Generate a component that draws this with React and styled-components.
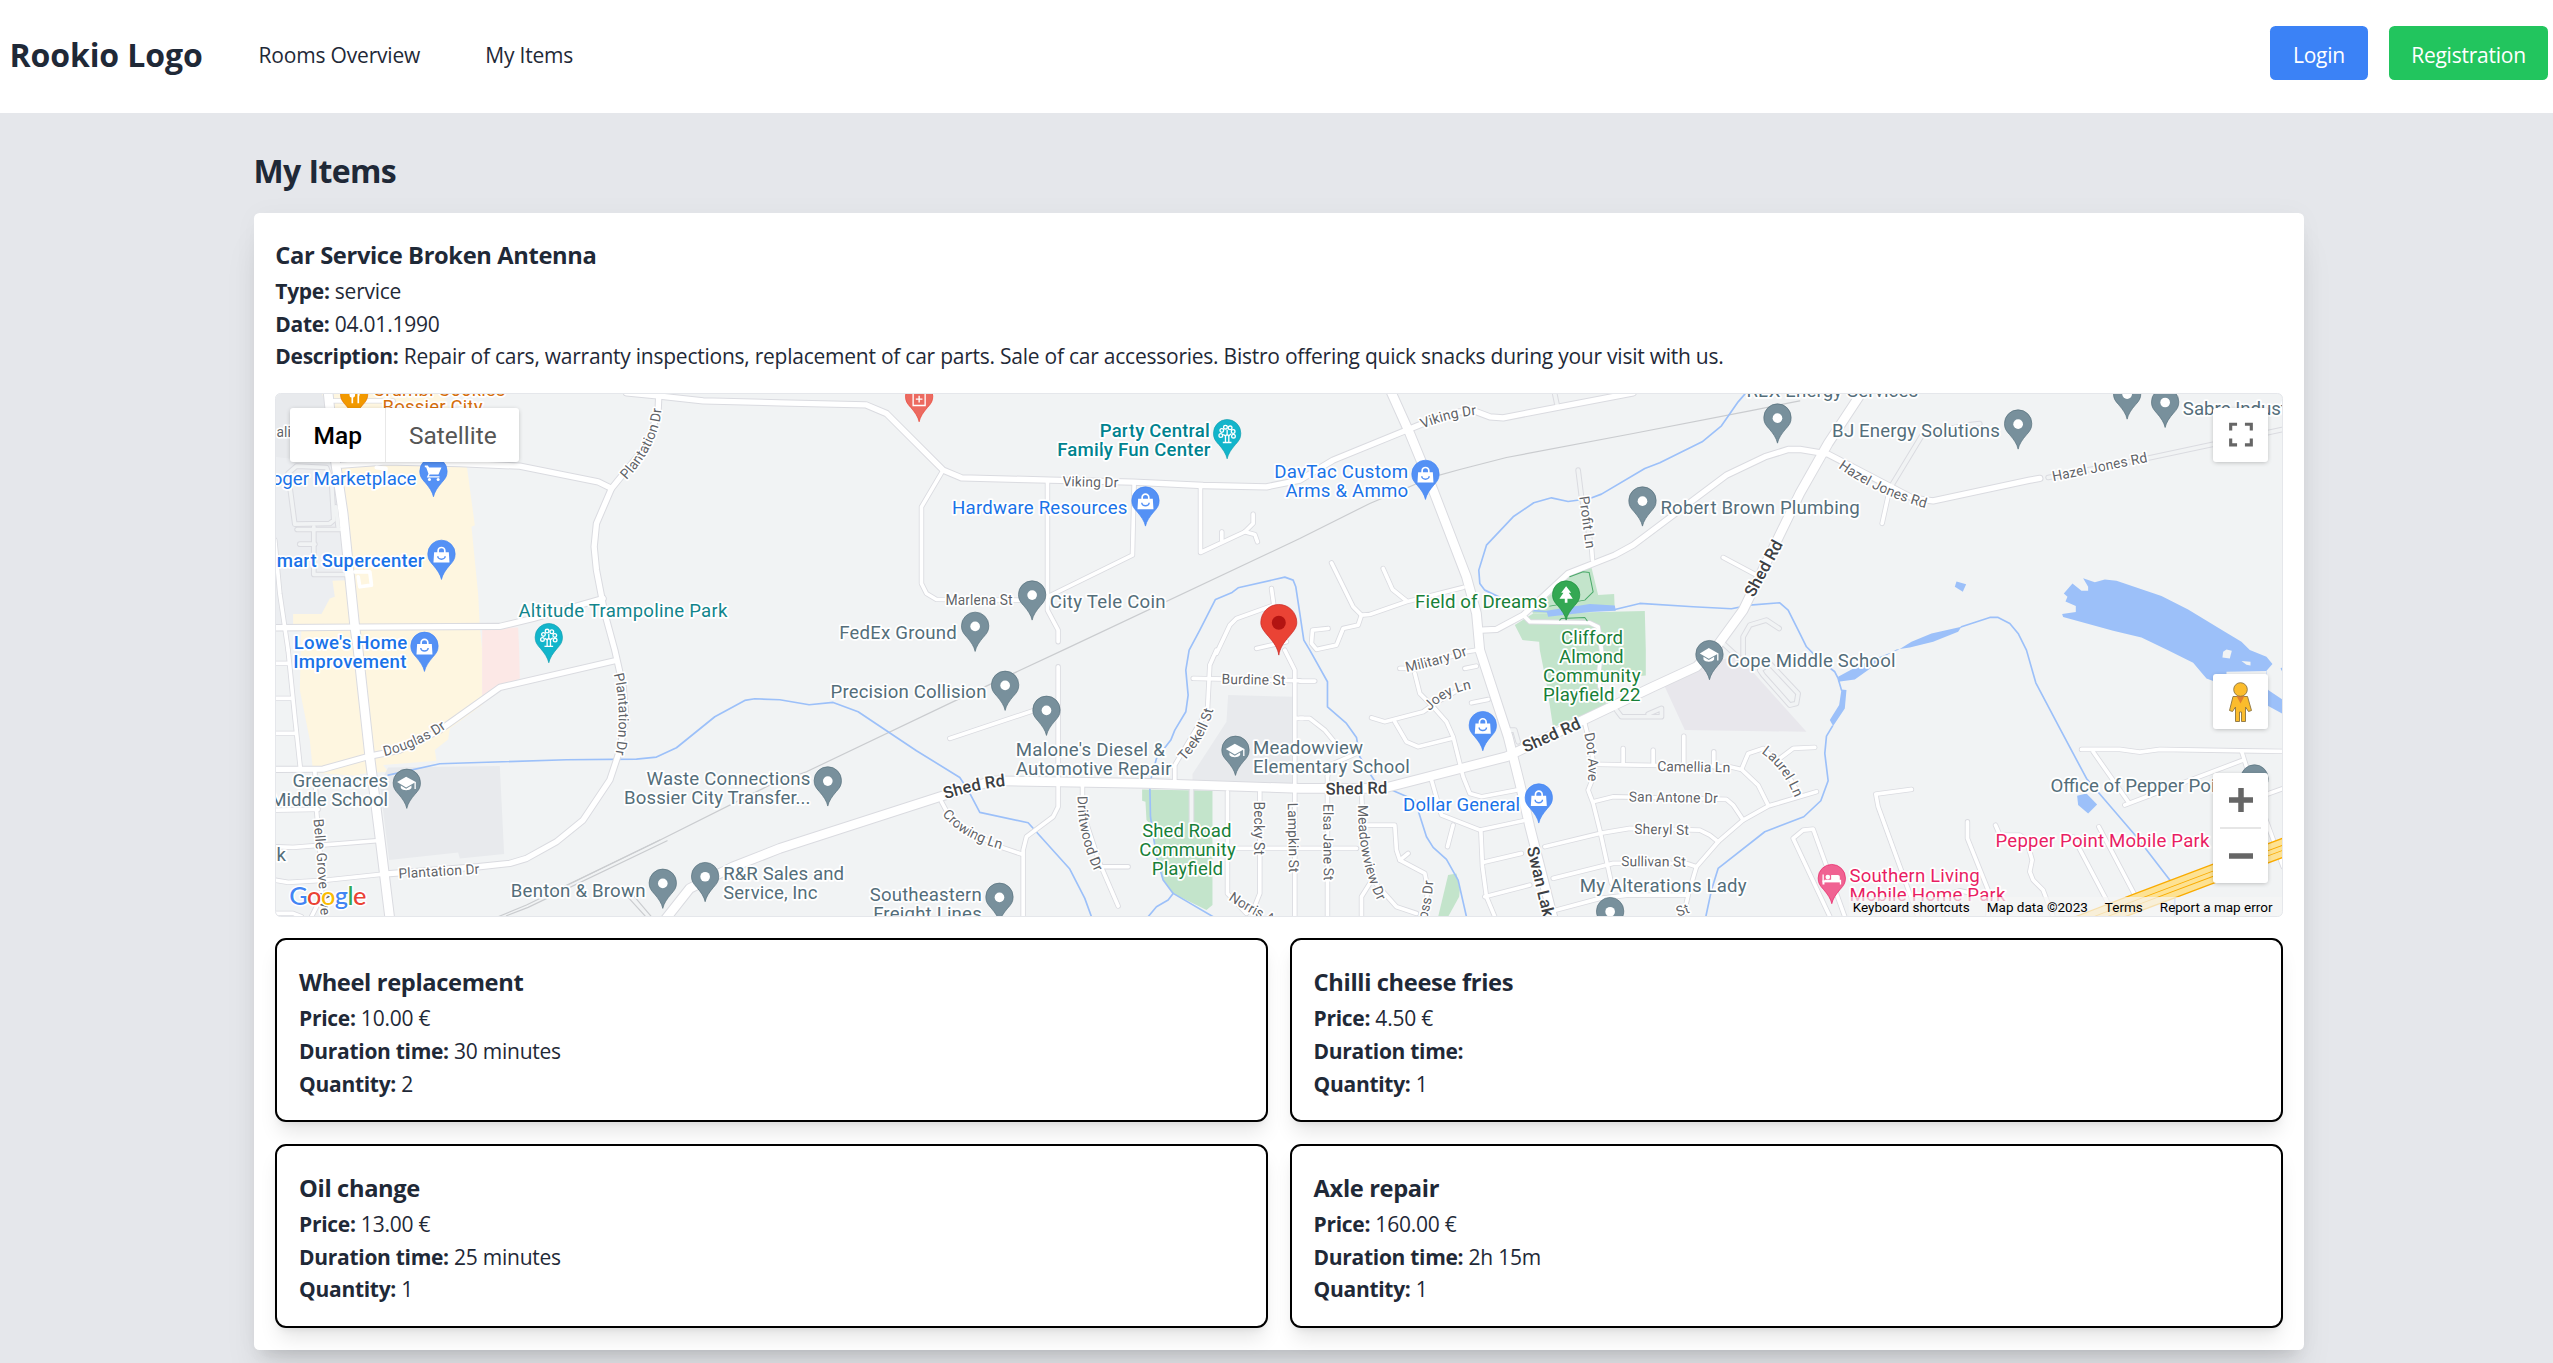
import React from "react";
import styled, { createGlobalStyle, css } from "styled-components";

const GlobalStyle = createGlobalStyle`
  *, *::before, *::after { box-sizing: border-box; }
  body {
    margin: 0;
    background: #e5e7eb;
    color: #1f2937;
    font-family: "Open Sans", "Noto Sans", sans-serif;
    overflow: hidden;
  }
  h1, h2, h3, p { margin: 0; }
`;

/* ---------- page shell ---------- */

const bodyText = css`
  font-size: 21px;
  letter-spacing: -0.24px;
`;

const Page = styled.div`
  height: 1363px;
  overflow: hidden;
`;

const Header = styled.header`
  display: flex;
  align-items: flex-start;
  height: 113px;
  padding: 26px 5px 0 9.5px;
  background: #fff;
`;

const Brand = styled.div`
  width: 249px;
  padding-top: 7px;
  font-size: 32px;
  font-weight: 700;
  line-height: 43.6px;
  letter-spacing: -0.1px;
`;

const Nav = styled.nav`
  display: flex;
  gap: 65px;
  flex: 1;
`;

const NavLink = styled.a`
  ${bodyText}
  padding-top: 13px;
  line-height: 32.7px;
  letter-spacing: -0.18px;
`;

const Actions = styled.div`
  display: flex;
  gap: 21px;
`;

const Button = styled.button`
  ${bodyText}
  width: ${(p) => p.$width}px;
  height: 54px;
  padding: 4px 0 0;
  border: 0;
  border-radius: 5.5px;
  background: ${(p) => p.$color};
  color: #fff;
  font-family: inherit;
`;

const Main = styled.main`
  width: 2050.8px;
  margin-left: 253.5px;
  padding-top: 36px;
`;

const PageTitle = styled.h1`
  margin-bottom: 20.4px;
  font-size: 32px;
  line-height: 43.6px;
  letter-spacing: -0.6px;
`;

const Card = styled.section`
  padding: 21.8px;
  border-radius: 5.5px;
  background: #fff;
  box-shadow: 0 27px 34px -7px rgba(0, 0, 0, 0.1), 0 11px 14px -8px rgba(0, 0, 0, 0.1),
    0 0 26px rgba(0, 0, 0, 0.03);
`;

const Title = styled.h2`
  height: 38.1px;
  padding-top: 2px;
  font-size: 23.7px;
  line-height: 36.1px;
  letter-spacing: -0.36px;
`;

const Line = styled.p`
  ${bodyText}
  height: 32.7px;
  padding-top: 4px;
  line-height: 29.7px;
  white-space: nowrap;
`;

const Label = styled.strong`
  font-weight: 700;
  letter-spacing: -0.3px;
`;

const ItemGrid = styled.div`
  display: grid;
  grid-template-columns: 1fr 1fr;
  gap: 21.8px;
`;

const Item = styled.article`
  padding: 21.8px;
  border: 2px solid #000;
  border-radius: 11px;
  background: #fff;
  box-shadow: 0 13.6px 20.4px -4px rgba(0, 0, 0, 0.1), 0 5.5px 8px -5.5px rgba(0, 0, 0, 0.1);
`;

/* ---------- map frame and controls ---------- */

const MapFrame = styled.div`
  position: relative;
  height: 523.9px;
  margin: 21.8px 0;
  border: 1px solid #e5e7eb;
  border-radius: 5.5px;
  background: #f1f3f4;
  overflow: hidden;
`;

const MapSvg = styled.svg`
  display: block;
  width: 100%;
  height: 100%;
  font-family: Roboto, sans-serif;
`;

const controlBox = css`
  position: absolute;
  border-radius: 3px;
  background: #fff;
  box-shadow: 0 1px 5px -1px rgba(0, 0, 0, 0.3);
`;

const MapTypes = styled.div`
  ${controlBox}
  top: 14px;
  left: 14px;
  display: flex;
  height: 54px;
  font-family: Roboto, sans-serif;
  font-size: 24.5px;
  line-height: 55px;
`;

const MapType = styled.div`
  width: ${(p) => p.$width}px;
  text-align: center;
  color: ${(p) => (p.$active ? "#000" : "#565656")};
  font-weight: ${(p) => (p.$active ? 500 : 400)};
  border-left: ${(p) => (p.$active ? "0" : "1px solid #e8e8e8")};
`;

const Control = styled.div`
  ${controlBox}
  top: ${(p) => p.$top}px;
  right: 14px;
  width: 55px;
  height: ${(p) => p.$height}px;
  display: flex;
  flex-direction: column;
`;

const Glyph = styled.svg`
  display: block;
  width: 55px;
  height: 55px;
`;

const Divider = styled.div`
  height: 2px;
  margin: -1px 7px;
  background: #e6e6e6;
`;

const Attribution = styled.div`
  position: absolute;
  right: 0;
  bottom: 0;
  display: flex;
  gap: 17px;
  height: 19px;
  padding: 0 9px 0 4px;
  background: rgba(245, 245, 245, 0.7);
  color: #000;
  font-family: Roboto, sans-serif;
  font-size: 13.5px;
  line-height: 20px;
  white-space: nowrap;
`;

/* ---------- map drawing ---------- */

/* The map is drawn in map units, on a grid of tiles; a feature is written in
   the units of the tile in which it lies and is moved to its place here. */
const TILES = {
  A: [0, 0], B: [1560, 0], C: [3120, 0], D: [4620, 0],
  E: [0, 810], F: [1560, 810], G: [3120, 810], H: [4620, 810],
};

const place = (points) => {
  let tile = TILES.A;
  return points
    .trim()
    .split(/\s+/)
    .map((token) => {
      if (TILES[token]) {
        tile = TILES[token];
        return null;
      }
      const [x, y] = token.split(",").map(Number);
      return `${x + tile[0]},${y + tile[1]}`;
    })
    .filter(Boolean)
    .join(" ");
};

const AREAS = [
  ["#e8eaed", "A 40,38 190,38 210,240 130,255 45,230"],
  ["#eceef1", "A 45,230 215,250 240,400 285,740 45,743"],
  ["#fef6e0", "A 185,38 550,38 620,250 645,435 635,440 655,640 660,740 667,810 E 667,165 570,235 565,268 525,300 530,332 370,345 385,365 300,372 300,378 160,368 150,270 120,120 A 125,735 100,735 100,702 185,702 210,655 225,650 218,602 260,600 240,250 200,70"],
  ["#fce8e6", "A 667,745 775,742 778,810 E 780,85 720,112 667,145"],
  ["#e8eaed", "E 385,352 720,348 733,612 600,625 595,607 388,630 360,400"],
  ["#e8eaed", "F 1345,135 1545,140 1545,400 1238,395 1238,372 1340,215"],
  ["#e8e7ec", "G 1095,110 1190,50 1300,20 1345,50 1520,245 1155,240"],
  ["#c3e4cb", "F 1087,418 1298,422 1298,740 1298,765 1280,780 1180,730 1145,680 1110,520 1100,510 1097,455 1087,452"],
  ["#c3e4cb", "G 445,675 470,670 480,720 478,740 445,800 415,800"],
  ["#c3e4cb", "C 875,562 895,645 943,642 945,690 700,700 690,680 760,640 800,580"],
  ["#c3e4cb", "C 645,735 700,700 1035,693 1038,810 G 1038,76 895,90 920,165 760,232 740,100 720,0 C 718,785 668,780"],
  ["#9cc0f9", "C 740,692 870,672 945,676 948,692 870,696 745,710"],
  ["#9cc0f9", "D 295,810 335,785 395,760 485,740 475,755 400,785 330,802 H 290,-2 262,15 205,60 165,88 115,95 115,80 180,45 262,12"],
  ["#9cc0f9", "H 125,118 140,120 135,175 100,228 90,210 118,165"],
  ["#9cc0f9", "D 850,594 885,606 915,598 950,602 1085,648 1165,688 1270,752 1325,785 1350,810 H 1400,20 1418,42 1400,62 1405,120 1450,150 1450,192 1400,165 1238,92 1220,85 1180,38 1103,0 D 1025,772 940,752 790,711 787,702 828,696 828,678 797,664 803,650 792,640 818,610 845,632 865,632 865,620"],
  ["#9cc0f9", "H 1442,55 1450,50 1450,70"],
  ["#f1f3f4", "H 1270,5 1280,-2 1296,2 1290,25 1268,22"],
  ["#f1f3f4", "H 1325,33 1352,35 1352,46 1340,44"],
  ["#f1f3f4", "H 1280,65 1400,63 1400,120 1350,120 1280,75"],
  ["#9cc0f9", "D 470,604 499,612 489,635 465,620"],
  ["#9cc0f9", "H 832,437 860,430 892,463 865,490 835,465"],
];

const RAILS = [
  "E 715,800 800,765 1180,580 1540,400 F 80,365 530,150 850,0 C 0,475 210,370 400,290 480,268 620,232 1000,160 1350,92 1500,62",
  "E 740,797 805,772 1222,572",
  "E 880,725 1200,570",
  "E 1103,740 1158,800",
  "E 1120,735 1175,800",
];

const STREAMS = [
  "E 385,375 540,341 920,329 1130,327 1190,321 1250,293 1365,200 1455,151 1485,146 F 0,149 88,164 160,157 235,185 410,302 540,382 565,420 600,487 745,518 870,657 915,745 935,800",
  "F 1300,800 1180,730 1150,690 1130,620 1112,500 1110,400 1130,325 1173,270 1185,240 1218,185 1225,135 1218,60 1228,0 B 1260,750 1307,658 1357,637 1375,623 1515,591 1540,600 1548,620 C 0,700 12,780 30,810 G 83,95 83,170 140,220 170,262 180,320 210,370 230,400 345,450 380,560 400,592 440,628 475,690 500,800",
  "F 1180,730 1165,750 1130,770 1105,800",
  "C 1335,42 1315,65 1265,137 1207,185 1080,248 1035,265 905,342 870,355 805,364 755,353 702,368 640,410 560,495 537,570 540,610 555,630 680,690 745,695",
  "C 945,688 1020,670 1180,680 1295,686 1350,675 1440,668 1465,690 1500,760 D 20,800 H 60,30 105,65 115,85 125,120",
  "H 98,228 80,258 75,310 85,392 63,452 12,500 G 1395,545 1255,655 1235,720 1218,800",
  "D 485,740 570,712 595,712 630,730 655,760 680,810 H 708,98 780,235 860,385 1010,560 1110,690",
  "H 1125,735 1125,800",
];

/* outlined service lanes */
const LANES = [
  "A 110,258 200,262 215,300 222,420 210,430 105,432 85,280 110,258",
  "A 112,448 240,448",
  "A 120,492 165,492",
  "A 162,440 162,583 260,583",
  "A 228,380 235,440",
  "C 765,42 772,75",
  "C 835,270 845,350 875,500",
  "C 1270,790 1335,850",
  "C 1330,840 1330,770 1350,735 1400,720 1438,745",
  "D 540,130 500,135 370,160 270,325",
  "D 745,292 1040,235 1447,148",
  "G 950,180 965,200 1085,200 1085,175 1045,192",
  "G 1390,75 1470,165 1490,160 1495,130 1410,40 1380,60 1390,75",
  "G 620,240 645,240 655,275",
  "F 1235,420 1235,535",
];

const SMALL = [
  "E 85,0 105,200 122,358", "A 45,480 60,640 85,810",
  "E 45,40 85,40", "E 45,145 95,145", "E 45,250 108,250", "E 45,480 175,478",
  "E 165,360 170,478 180,600 190,700 180,750 155,800", "E 45,590 100,592 350,572", "E 45,790 100,790 125,800",
  "E 45,690 85,697 200,690 370,672", "A 215,62 400,62",
  "B 490,270 425,380 425,610 440,640 470,658 720,660", "B 803,300 803,690 835,750 835,785",
  "B 1063,310 1058,525 803,650", "B 1262,320 1262,517 1395,455 1420,430 1420,402",
  "B 1395,455 1425,463 1433,485", "B 1326,480 1326,455", "B 1475,625 1482,675 1370,715 1350,735 1310,820",
  "B 1430,805 1520,785",
  "F 1515,0 1545,60 1545,800", "F 1240,85 1560,92", "F 1310,0 1290,45 1283,180 1185,345 1185,400",
  "F 835,50 835,470 820,500 740,560 730,600 730,800", "F 908,405 908,440 920,520 960,640 1015,768",
  "F 965,650 1045,650", "F 485,455 520,520 660,590 725,612", "F 510,265 760,182",
  "F 1345,595 1730,595", "F 1440,425 1440,730 1420,780", "F 1343,425 1343,730 1400,790", "F 1545,205 1570,205",
  "C 95,548 160,680 185,705 210,703 320,665 490,622", "C 250,565 278,628 320,662",
  "C 185,705 175,735 130,745 110,795 50,808 35,790 38,750 85,745", "C 1270,532 1370,585",
  "C 875,500 878,540", "C 670,705 690,725 870,728 895,740 905,810 G 898,60 900,110", "D 270,325 247,430",
  "G 0,93 45,93", "G 0,205 30,205 75,240 120,295", "G 300,55 340,55 500,5 530,0",
  "G 345,70 360,130 400,170 440,215 460,260 490,380 510,430 545,440 650,420",
  "G 215,203 255,215 370,185 405,160 500,105", "G 285,215 320,275 355,290 455,265", "G 515,158 565,148",
  "G 495,55 530,48", "G 395,390 425,495 540,540 670,512", "G 460,525 443,590",
  "G 543,540 548,650 560,740 585,800", "G 550,637 665,610", "G 555,740 690,705",
  "G 735,590 900,550 990,535 1200,540 1230,555 1255,575", "G 760,685 940,640 1160,640 1190,650",
  "G 750,785 900,745 985,735 1160,735", "G 855,220 875,300 885,370 865,420 880,460 900,540 935,700",
  "G 895,343 1290,350 1325,358 1375,405 1405,465", "G 970,295 970,340", "G 1060,300 1060,340",
  "G 1152,258 1152,345", "G 1242,305 1242,350", "G 1325,358 1345,310 1390,295 1450,350 1500,435",
  "G 1440,325 1480,295 1545,292", "G 880,455 940,440 1280,448 1300,465 1330,510",
  "G 1550,425 1405,468 1330,510 1255,575 1190,650 1165,735 1150,800",
  "G 83,345 83,800", "G 83,380 90,345 170,310", "G 185,430 190,520 195,600 210,680 290,770 350,790",
  "G 190,525 285,525 290,600 300,630 375,670 385,720 370,800", "G 300,630 325,610", "G 185,800 185,740 210,700",
  "H 95,810 -20,565 10,540 40,537 135,800",
  "H 845,298 960,298 1020,306 1080,298 1320,302 1450,304", "H 880,305 985,455", "H 975,465 1330,330",
  "H 1325,302 1340,350 1450,650", "H 1380,440 1450,415", "H 335,418 228,432 235,470 355,800",
  "H 503,515 503,565 565,720 565,800", "H 587,525 600,555 660,555 680,570 697,630 690,665 700,690 730,720 760,800",
  "H 820,560 915,740 940,790", "H 897,530 1005,735", "H 540,735 480,722 440,735 440,800",
];

const MEDIUM = [
  "A 1100,38 1200,48 1330,62 B 0,68 258,74 320,100 490,270 545,293 810,300 1060,306 1270,316 1460,320 C 0,300 100,240 320,150 370,130 480,95 530,95 570,110 610,113 780,80 1000,38",
  "A 1197,45 1195,90 1165,190 1055,325 1010,430 1003,500 1010,570 1035,700 E 1065,0 1090,110 1098,200 1080,300 1050,390 970,510 890,575 800,625 750,640 655,650 370,672",
  "A 245,255 380,245 600,250 780,258 1015,305 1055,325",
  "A 45,743 290,741 720,739 820,715 1030,655",
  "E 45,358 190,357 330,318 420,300 540,240 720,112 1065,32",
  "C 545,750 590,748 670,705 805,580 945,525 1000,495 1280,285 1395,230 1465,208 D 0,208 85,222 340,355 400,362 690,300 720,295",
];

const MAJOR = [
  "A 205,38 225,230 250,400 285,740 E 295,0 330,320 360,560 390,805",
  "C 275,38 330,160 400,330 500,590 530,700 G 540,0 625,260 660,400 690,530 760,805",
  "E 1215,810 1290,715 1420,650 F 0,595 480,440 640,392 1100,400 G 0,415 250,415 620,320 840,215 1060,110 1190,50 C 1250,800 1330,690 D 0,340 85,190 185,38",
];

const ROAD_CLASSES = [
  { roads: LANES, casing: 17, fill: 11, color: "#f1f3f4" },
  { roads: SMALL, casing: 16, fill: 11, color: "#fff" },
  { roads: MEDIUM, casing: 22, fill: 16, color: "#fff" },
  { roads: MAJOR, casing: 32, fill: 26, color: "#fff" },
];

const Poly = ({ at, stroke, width }) => (
  <polyline
    points={place(at)}
    fill="none"
    stroke={stroke}
    strokeWidth={width}
    strokeLinecap="round"
    strokeLinejoin="round"
  />
);

const SLATE = "#546e7a";
const BLUE = "#1a73e8";
const GREEN = "#188038";
const TEAL = "#12858c";
const PINK = "#e91e63";

/* tile, text, colour, x, baseline, length (0: natural), anchor, weight */
const PLACES = [
  ["A", "Crumbl Cookies", "#d56e0c", 340, 47, 397],
  ["A", "Bossier City", "#d56e0c", 368, 98, 300],
  ["A", "Kroger Marketplace", BLUE, 470, 314, 0, "end"],
  ["A", "mart Supercenter", BLUE, 51, 561, 443, "start", 500],
  ["A", "Lowe's Home", BLUE, 102, 808, 340, "start", 500],
  ["E", "Improvement", BLUE, 100, 55, 340, "start", 500],
  ["A", "Altitude Trampoline Park", TEAL, 776, 712, 627],
  ["B", "Party Central", "#00838f", 960, 170, 330, "start", 500],
  ["B", "Family Fun Center", "#00838f", 832, 228, 460, "start", 500],
  ["B", "Hardware Resources", BLUE, 517, 402, 526],
  ["B", "City Tele Coin", SLATE, 810, 683, 347],
  ["B", "FedEx Ground", SLATE, 178, 778, 353],
  ["B", "DavTac Custom", BLUE, 1483, 293, 402],
  ["B", "Arms & Ammo", BLUE, 1517, 351, 368],
  ["C", "Field of Dreams", GREEN, 346, 684, 397],
  ["C", "Robert Brown Plumbing", SLATE, 1082, 402, 598],
  ["C", "Clifford", GREEN, 784, 792, 186],
  ["G", "Almond", GREEN, 778, 38, 193],
  ["G", "Community", GREEN, 730, 96, 292],
  ["G", "Playfield 22", GREEN, 730, 153, 292],
  ["C", "REX Energy Services", SLATE, 1340, 52, 515],
  ["D", "BJ Energy Solutions", SLATE, 97, 172, 503],
  ["D", "Sabre Industries", SLATE, 1149, 105, 0],
  ["E", "Greenacres", SLATE, 98, 410, 287],
  ["E", "Middle School", SLATE, 385, 467, 0, "end"],
  ["E", "k", SLATE, 50, 632, 0],
  ["E", "Waste Connections", SLATE, 1160, 405, 492],
  ["E", "Bossier City Transfer...", SLATE, 1093, 462, 559],
  ["E", "Benton & Brown", SLATE, 753, 740, 404],
  ["E", "R&R Sales and", SLATE, 1390, 690, 363],
  ["E", "Service, Inc", SLATE, 1390, 747, 283],
  ["F", "Precision Collision", SLATE, 152, 145, 468],
  ["F", "Malone's Diesel &", SLATE, 708, 318, 447],
  ["F", "Automotive Repair", SLATE, 708, 376, 467],
  ["F", "Southeastern", SLATE, 270, 754, 336],
  ["F", "Freight Lines", SLATE, 280, 811, 326],
  ["F", "Shed Road", GREEN, 1087, 560, 268],
  ["F", "Community", GREEN, 1078, 618, 290],
  ["F", "Playfield", GREEN, 1116, 676, 214],
  ["F", "Meadowview", SLATE, 1420, 311, 330],
  ["F", "Elementary School", SLATE, 1420, 370, 470],
  ["G", "Dollar General", BLUE, 310, 484, 351],
  ["G", "My Alterations Lady", SLATE, 840, 726, 500],
  ["G", "Cope Middle School", SLATE, 1282, 52, 505],
  ["H", "Office of Pepper Point", SLATE, 752, 427, 0],
  ["H", "Pepper Point Mobile Park", PINK, 587, 592, 642],
  ["H", "Southern Living", PINK, 149, 697, 391],
  ["H", "Mobile Home Park", PINK, 149, 754, 468],
];

/* tile, text, baseline (start, bend, end or start, end), size class */
const STREETS = [
  ["A", "ali", "50,172 130,172"],
  ["A", "Plantation Dr", "1100,300 1200,190 1206,78"],
  ["E", "Plantation Dr", "1062,72 1090,190 1066,318"],
  ["E", "Plantation Dr", "417,685 658,671"],
  ["E", "Douglas Dr", "374,318 480,292 565,230"],
  ["E", "Belle Grove Ave", "161,508 172,620 184,810"],
  ["B", "Marlena St", "497,674 710,674"],
  ["B", "Viking Dr", "848,318 1020,322"],
  ["C", "Viking Dr", "368,145 450,112 530,104"],
  ["C", "Profit Ln", "838,350 860,515"],
  ["D", "Hazel Jones Rd", "115,262 230,345 385,386"],
  ["D", "Hazel Jones Rd", "760,303 1050,244"],
  ["F", "Burdine St", "1325,101 1520,105"],
  ["F", "Teekell St", "1213,334 1290,250 1304,160"],
  ["F", "Crowing Ln", "487,492 540,565 672,600"],
  ["F", "Driftwood Dr", "893,438 893,560 948,672"],
  ["F", "Becky St", "1424,454 1424,625"],
  ["F", "Lampkin St", "1524,458 1528,680"],
  ["F", "Norris Ave", "1345,748 1420,800 1520,840"],
  ["G", "Elsa Jane St", "70,462 72,700"],
  ["G", "Meadowview Dr", "175,465 172,630 236,758"],
  ["G", "Ross Dr", "372,834 398,770 402,670"],
  ["G", "Military Dr", "320,66 420,45 508,14"],
  ["G", "Joey Ln", "390,184 430,135 505,118"],
  ["G", "Dot Ave", "853,250 870,330 864,402"],
  ["G", "Camellia Ln", "1072,363 1300,367"],
  ["G", "San Antone Dr", "987,454 1265,459"],
  ["G", "Sheryl St", "1003,551 1180,555"],
  ["G", "Sullivan St", "964,648 1170,650"],
  ["G", "Laurel Ln", "1384,308 1445,350 1482,435"],
  ["G", "St", "1135,800 1175,786"],
  ["C", "Shed Rd", "1362,654 1450,492", "major"],
  ["F", "Shed Rd", "497,448 580,418 676,408", "major"],
  ["G", "Shed Rd", "78,434 272,430", "major"],
  ["G", "Shed Rd", "677,308 852,230", "major"],
  ["G", "Swan Lake Rd", "681,594 753,900", "major"],
];

const Halo = styled.text`
  paint-order: stroke;
  stroke: #fff;
  stroke-width: ${(p) => p.$halo || 11}px;
  stroke-linejoin: round;
`;

const StreetName = ({ id, tile, text, at, major }) => {
  const points = at.split(" ").map((p) => place(`${tile} ${p}`));
  const d = points.length === 3 ? `M${points[0]} Q${points[1]} ${points[2]}` : `M${points[0]} L${points[1]}`;
  return (
    <>
      <path id={id} d={d} fill="none" />
      <Halo
        fontSize={major ? 50 : 42}
        fontWeight={major ? 500 : 400}
        fill={major ? "#3c4043" : "#5f6368"}
        $halo={10}
      >
        <textPath href={`#${id}`}>{text}</textPath>
      </Halo>
    </>
  );
};

const PIN = "M0,0C-3,-15 -13,-29 -25,-43C-36,-55 -41,-62 -41,-77A41,41 0 0 1 41,-77C41,-62 36,-55 25,-43C13,-29 3,-15 0,0Z";

const PIN_COLORS = {
  slate: ["#78909c", "#546e7a"],
  blue: ["#5491f5", "#4285f4"],
  teal: ["#12b5cb", "#129eaf"],
  red: ["#ec6a60", "#ea4335"],
  orange: ["#f29900", "#e37400"],
  green: ["#34a853", "#1e8e3e"],
  pink: ["#f06292", "#e91e63"],
};

const PIN_ICONS = {
  dot: <circle r="14.5" fill="#fff" />,
  bag: (
    <g>
      <path d="M-22,-7H22L24,24H-24Z" fill="#fff" />
      <path d="M-10,-4V-11A10,10 0 0 1 10,-11V-4" fill="none" stroke="#fff" strokeWidth="5" />
      <path d="M-11,5A11,9 0 0 0 11,5" fill="none" stroke="#5491f5" strokeWidth="4.5" />
    </g>
  ),
  cart: (
    <g fill="#fff">
      <path d="M-26,-19H-17L-13,-13H24L15,8H-11L-14,13H18V17H-20L-15,6L-22,-14H-26Z" />
      <circle cx="-12" cy="23" r="4.5" />
      <circle cx="14" cy="23" r="4.5" />
    </g>
  ),
  school: (
    <g fill="#fff">
      <path d="M-29,-4L-2,-20L27,-4L-2,12Z" />
      <path d="M-18,6L-2,16L14,6V14C8,23 -12,23 -18,14Z" />
      <path d="M23,-4H27V17H23Z" />
    </g>
  ),
  tree: <path d="M0,-27L15,-7H8L20,11H4V23H-4V11H-20L-8,-7H-15Z" fill="#fff" />,
  park: (
    <g fill="none" stroke="#fff" strokeWidth="4">
      <circle cx="-19" cy="5" r="5.5" />
      <circle cx="-16" cy="-10" r="5.5" />
      <circle cx="-5" cy="-20" r="5.5" />
      <circle cx="9" cy="-18" r="5.5" />
      <circle cx="18" cy="-7" r="5.5" />
      <circle cx="19" cy="7" r="5.5" />
      <path d="M-12,2L-3,7M12,0L4,7M0,-12V4" />
      <path d="M-5,26V8A5,5 0 0 1 5,8V26M-13,26H13" />
    </g>
  ),
  hospital: (
    <g fill="none" stroke="#fff" strokeWidth="4">
      <path d="M-18,26V-12H18V26Z" />
      <path d="M-10,7H10M0,-3V17" />
    </g>
  ),
  fork: <path d="M-14,-20V0C-14,6 -12,8 -8,9V26H-3V9C1,8 3,6 3,0V-20M10,26V-20C18,-16 18,0 15,6V26Z" fill="#fff" />,
  bed: (
    <g fill="#fff">
      <path d="M-28,-13H-24V7H24V-5C24,-9 22,-11 18,-11H-2V3H-22V17H-28ZM24,3H28V17H24Z" />
      <path d="M-28,5H27V11H-28Z" />
      <circle cx="-12" cy="-5" r="7" />
    </g>
  ),
};

const PINS = [
  ["A", 283, 118, "orange", "fork"],
  ["A", 521, 350, "blue", "cart"],
  ["A", 545, 598, "blue", "bag"],
  ["E", 494, 64, "blue", "bag"],
  ["E", 867, 38, "teal", "park"],
  ["B", 418, 125, "red", "hospital"],
  ["B", 1342, 236, "teal", "park"],
  ["B", 1097, 438, "blue", "bag"],
  ["B", 757, 720, "slate", "dot"],
  ["F", 586, 4, "slate", "dot"],
  ["F", 676, 181, "slate", "dot"],
  ["F", 800, 256, "slate", "dot"],
  ["E", 441, 475, "slate", "school"],
  ["F", 144, 468, "slate", "dot"],
  ["E", 1209, 775, "slate", "dot"],
  ["E", 1336, 755, "slate", "dot"],
  ["F", 659, 817, "slate", "dot"],
  ["C", 377, 358, "blue", "bag"],
  ["C", 1028, 438, "slate", "dot"],
  ["C", 1433, 189, "slate", "dot"],
  ["C", 799, 720, "green", "tree"],
  ["D", 655, 207, "slate", "dot"],
  ["D", 982, 117, "slate", "dot"],
  ["D", 1096, 142, "slate", "dot"],
  ["F", 1367, 376, "slate", "school"],
  ["G", 1229, 89, "slate", "school"],
  ["G", 549, 302, "blue", "bag"],
  ["G", 717, 519, "blue", "bag"],
  ["G", 931, 860, "slate", "dot"],
  ["H", 96, 761, "pink", "bed"],
  ["H", 1364, 462, "slate", "dot"],
];

const Pin = ({ tile, x, y, color, icon }) => (
  <g transform={`translate(${TILES[tile][0] + x} ${TILES[tile][1] + y})`}>
    <path d={PIN} fill={PIN_COLORS[color][0]} stroke={PIN_COLORS[color][1]} strokeWidth="2" />
    <g transform="translate(0 -75)">{PIN_ICONS[icon]}</g>
  </g>
);

const HIGHWAY = "H 780,850 850,820 1010,758 1240,671 1460,589";
const HIGHWAY_COLORS = [["#f9ab00", 58], ["#fde293", 50], ["#f9ab00", 17], ["#fde293", 12]];
const GOOGLE = [["G", "#4285f4"], ["o", "#ea4335"], ["o", "#fbbc04"], ["g", "#4285f4"], ["l", "#34a853"], ["e", "#ea4335"]];

const MapDrawing = () => (
  <MapSvg viewBox="48.6 41.5 6015.6 1566" preserveAspectRatio="none">
    {AREAS.map(([fill, at]) => (
      <polygon key={at} points={place(at)} fill={fill} />
    ))}
    {RAILS.map((at) => (
      <Poly key={at} at={at} stroke="#cacccf" width={3.5} />
    ))}
    {STREAMS.map((at) => (
      <Poly key={at} at={at} stroke="#9cc0f9" width={5} />
    ))}
    {ROAD_CLASSES.map(({ roads, casing }, i) =>
      roads.map((at) => <Poly key={i + at} at={at} stroke="#dadbe0" width={casing} />)
    )}
    {ROAD_CLASSES.map(({ roads, fill, color }, i) =>
      roads.map((at) => <Poly key={i + at} at={at} stroke={color} width={fill} />)
    )}
    <Poly at="C 810,590 850,575 868,577 880,635 855,660 750,678" stroke="#4ba96a" width={3} />
    <Poly at="C 780,720 785,715 855,712 862,722" stroke="#4ba96a" width={3} />
    <Poly at="A 350,262 378,265 374,308 350,322 345,305" stroke="#fff" width={12} />
    <Poly at="A 285,575 330,575 335,615 300,620 295,590" stroke="#fff" width={11} />
    {HIGHWAY_COLORS.map(([stroke, width]) => (
      <Poly key={width} at={HIGHWAY} stroke={stroke} width={width} />
    ))}
    {STREETS.map(([tile, text, at, size], i) => (
      <StreetName key={tile + at} id={`street-${i}`} tile={tile} text={text} at={at} major={size === "major"} />
    ))}
    {PINS.map(([tile, x, y, color, icon]) => (
      <Pin key={`${tile}${x}`} tile={tile} x={x} y={y} color={color} icon={icon} />
    ))}
    {PLACES.map(([tile, text, fill, x, y, length, anchor = "start", weight = 400]) => (
      <Halo
        key={tile + text}
        x={TILES[tile][0] + x}
        y={TILES[tile][1] + y}
        fill={fill}
        fontSize="56"
        fontWeight={weight}
        textAnchor={anchor}
        textLength={length || undefined}
      >
        {text}
      </Halo>
    ))}
    <g transform="translate(3057 825)">
      <path
        d="M0,0C-3,-20 -14,-37 -31,-56C-46,-73 -54,-84 -54,-98A54,54 0 0 1 54,-98C54,-84 46,-73 31,-56C14,-37 3,-20 0,0Z"
        fill="#ea4335"
        stroke="#c5221f"
        strokeWidth="2"
      />
      <circle cy="-97" r="21" fill="#b31412" />
    </g>
    <Halo x="88" y="1575" fontSize="76" fontWeight="500" textLength="232" $halo={9} fontFamily="Lato">
      {GOOGLE.map(([letter, fill], i) => (
        <tspan key={i} fill={fill}>{letter}</tspan>
      ))}
    </Halo>
  </MapSvg>
);

const LocationMap = () => (
  <MapFrame>
    <MapDrawing />
    <MapTypes>
      <MapType $width={95} $active>Map</MapType>
      <MapType $width={134}>Satellite</MapType>
    </MapTypes>
    <Control $top={14} $height={54}>
      <Glyph viewBox="0 0 55 55">
        <path
          d="M17.5,23V16.5H24M32,16.5H38.5V23M38.5,31V37.5H32M24,37.5H17.5V31"
          fill="none"
          stroke="#666"
          strokeWidth="3.2"
        />
      </Glyph>
    </Control>
    <Control $top={280} $height={55}>
      <Glyph viewBox="0 0 55 55">
        <path
          d="M20,22.5H34.5L38.5,36.5L35.5,37.5L32.5,33V47.5H28.5V38H26.5V47.5H22.5V33L19.5,37.5L16.5,36.5Z"
          fill="#fbbc2c"
          stroke="#8a7340"
          strokeWidth="0.9"
        />
        <path d="M23.5,22L31.5,22L27.5,29.5Z" fill="#e1802f" />
        <circle cx="27.5" cy="15.5" r="6.8" fill="#fbbc2c" stroke="#8a7340" strokeWidth="0.9" />
      </Glyph>
    </Control>
    <Control $top={379} $height={110}>
      <Glyph viewBox="0 0 55 55">
        <path d="M16,27H40M28,15V39" stroke="#666" strokeWidth="5.5" />
      </Glyph>
      <Divider />
      <Glyph viewBox="0 0 55 55">
        <path d="M16,28H40" stroke="#666" strokeWidth="5.5" />
      </Glyph>
    </Control>
    <Attribution>
      <span>Keyboard shortcuts</span>
      <span>Map data ©2023</span>
      <span>Terms</span>
      <span>Report a map error</span>
    </Attribution>
  </MapFrame>
);

/* ---------- content ---------- */

const PRODUCTS = [
  { name: "Wheel replacement", price: "10.00 €", duration: "30 minutes", quantity: 2 },
  { name: "Chilli cheese fries", price: "4.50 €", duration: "", quantity: 1 },
  { name: "Oil change", price: "13.00 €", duration: "25 minutes", quantity: 1 },
  { name: "Axle repair", price: "160.00 €", duration: "2h 15m", quantity: 1 },
];

const Field = ({ label, children }) => (
  <Line>
    <Label>{label}:</Label> {children}
  </Line>
);

export default function App() {
  return (
    <Page>
      <GlobalStyle />
      <Header>
        <Brand>Rookio Logo</Brand>
        <Nav>
          <NavLink>Rooms Overview</NavLink>
          <NavLink>My Items</NavLink>
        </Nav>
        <Actions>
          <Button $width={98} $color="#3b82f6">Login</Button>
          <Button $width={159} $color="#22c55e">Registration</Button>
        </Actions>
      </Header>
      <Main>
        <PageTitle>My Items</PageTitle>
        <Card>
          <Title>Car Service Broken Antenna</Title>
          <Field label="Type">service</Field>
          <Field label="Date">04.01.1990</Field>
          <Field label="Description">
            Repair of cars, warranty inspections, replacement of car parts. Sale of car accessories. Bistro
            offering quick snacks during your visit with us.
          </Field>
          <LocationMap />
          <ItemGrid>
            {PRODUCTS.map((p) => (
              <Item key={p.name}>
                <Title as="h3">{p.name}</Title>
                <Field label="Price">{p.price}</Field>
                <Field label="Duration time">{p.duration}</Field>
                <Field label="Quantity">{p.quantity}</Field>
              </Item>
            ))}
          </ItemGrid>
        </Card>
      </Main>
    </Page>
  );
}
